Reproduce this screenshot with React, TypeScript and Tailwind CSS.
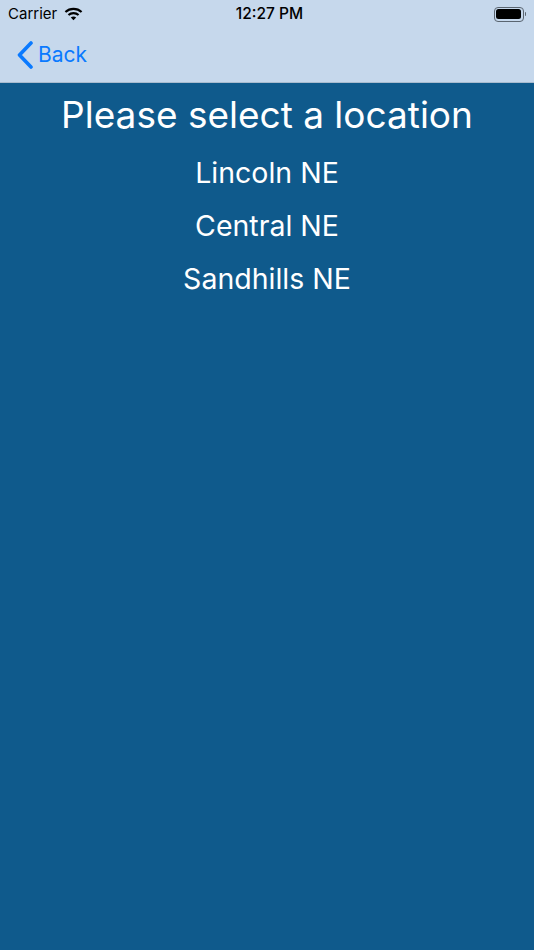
import React from 'react';

function Wifi() {
  return (
    <svg width="19" height="14" viewBox="0 0 17 13" fill="none" stroke="#000">
      <path d="M1 4.6C5.2 0.8 11.8 0.8 16 4.6" strokeWidth="2" />
      <path d="M3.8 7.4C6.4 5.1 10.6 5.1 13.2 7.4" strokeWidth="2" />
      <path d="M8.5 12.4L6 9.7C7.4 8.6 9.6 8.6 11 9.7Z" fill="#000" stroke="none" />
    </svg>
  );
}

function Battery() {
  return (
    <div className="flex items-center gap-[1px]">
      <div className="flex h-[15px] w-[30px] items-center justify-center rounded-[4px] border border-[#5a6570] p-[1.5px]">
        <div className="h-full w-full rounded-[2.5px] bg-black" />
      </div>
      <div className="h-[4px] w-[1.5px] rounded-r-sm bg-[#5a6570]" />
    </div>
  );
}

export default function App() {
  const locations = ['Lincoln NE', 'Central NE', 'Sandhills NE'];

  return (
    <div className="flex min-h-[950px] flex-col bg-[#0f5a8c] font-['Inter','Liberation_Sans',sans-serif]">
      {/* Nav bar */}
      <div className="h-[83px] border-b border-[#a9bccf] bg-[#c6d8ec]">
        <div className="relative flex h-[28px] items-center justify-between pl-[8px] pr-[8px] text-[15px] text-black">
          <div className="flex items-center gap-[7px]">
            <span>Carrier</span>
            <Wifi />
          </div>
          <span className="absolute left-0 right-0 pl-[5px] text-center text-[15.5px] font-medium">12:27 PM</span>
          <Battery />
        </div>
        <div className="flex h-[54px] items-center gap-[5px] pl-[17px] text-[#0a7aff]">
          <svg width="16" height="28" viewBox="0 0 16 28" fill="none" stroke="currentColor" strokeWidth="3.6" strokeLinecap="round" strokeLinejoin="round">
            <path d="M14 2L2.5 14L14 26" />
          </svg>
          <span className="text-[21px]">Back</span>
        </div>
      </div>

      {/* Location list */}
      <div className="flex flex-col items-center text-white">
        <h1 className="mt-[9px] h-[45px] text-[37px] leading-[45px] font-normal">Please select a location</h1>
        <ul className="mt-[9px] flex flex-col items-center">
          {locations.map((l) => (
            <li key={l} className="h-[53px] text-[28.5px] leading-[53px]">
              {l}
            </li>
          ))}
        </ul>
      </div>
    </div>
  );
}
